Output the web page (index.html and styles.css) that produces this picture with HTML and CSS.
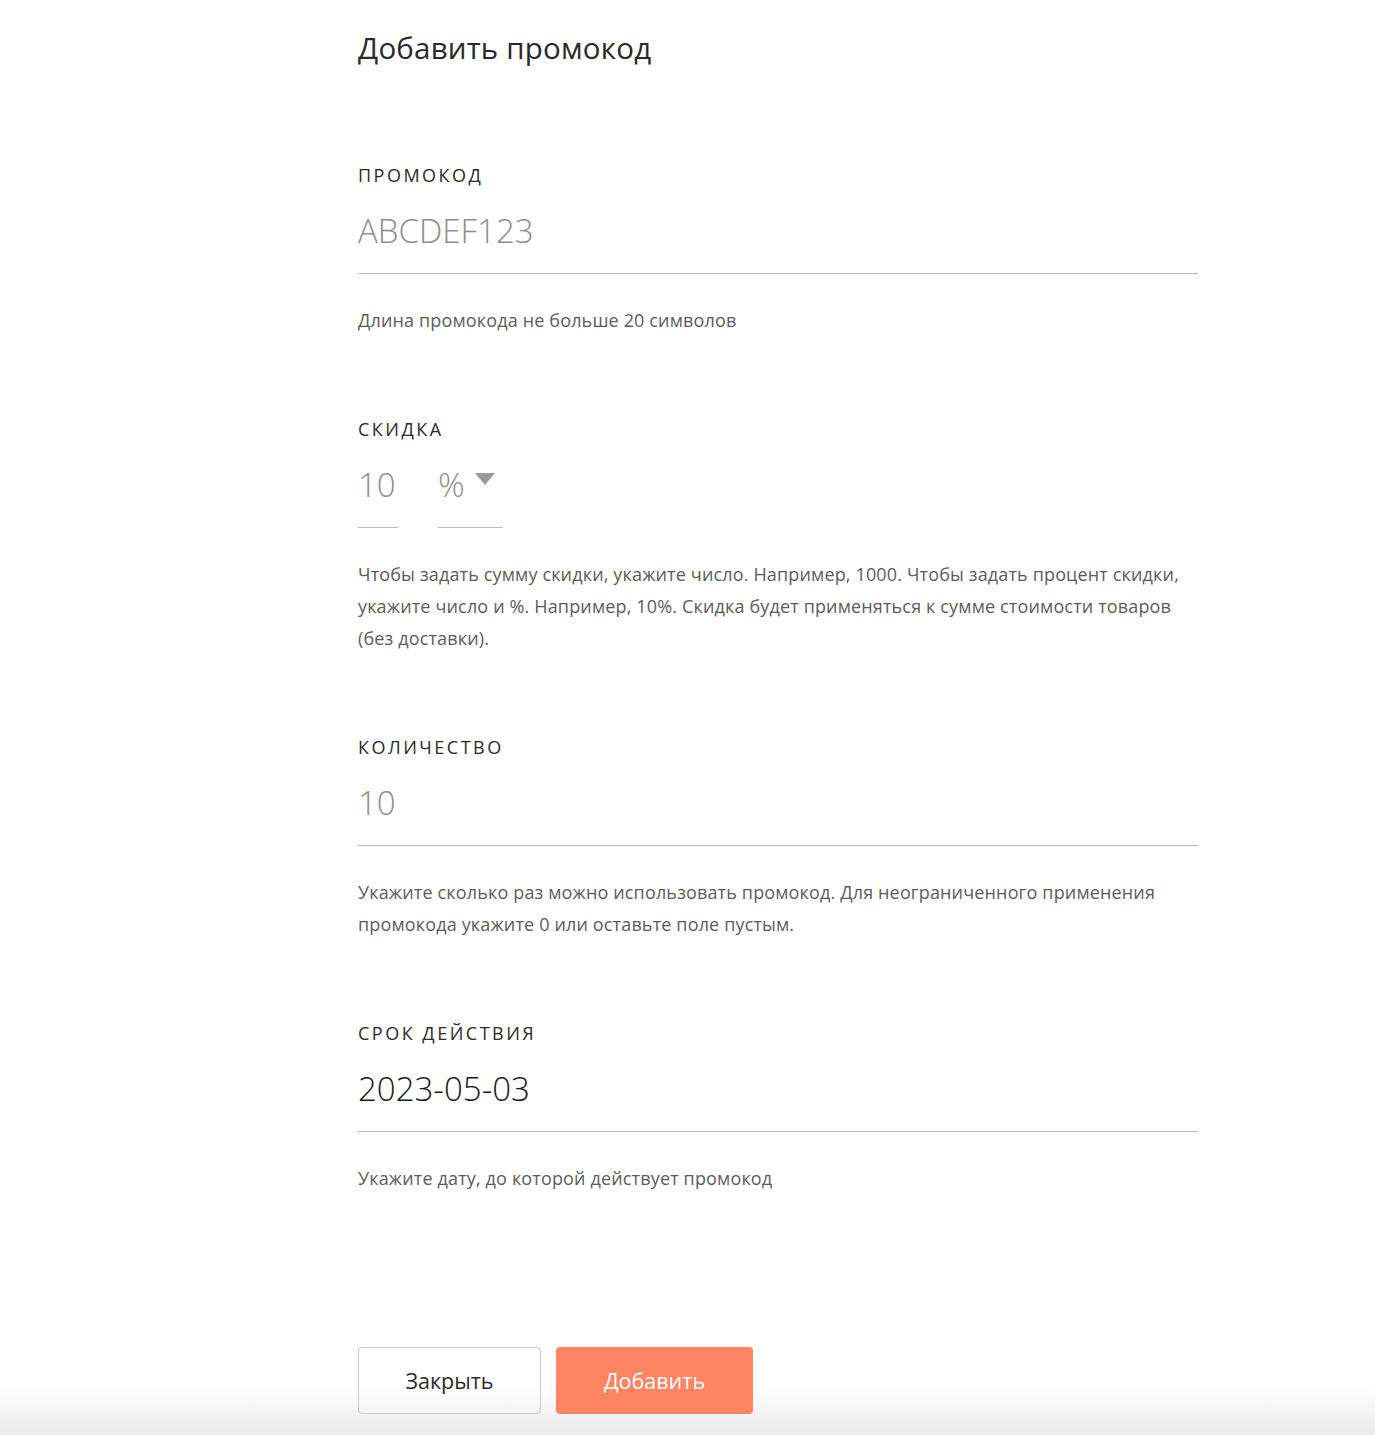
FILE: index.html
```html
<!DOCTYPE html>
<html lang="ru">
<head>
<meta charset="utf-8">
<title>Добавить промокод</title>
<link rel="stylesheet" href="styles.css">
</head>
<body>
<div class="page">
  <h1 class="title">Добавить промокод</h1>

  <div class="field field-first">
    <div class="label">Промокод</div>
    <div class="input"><span class="placeholder">ABCDEF123</span></div>
    <p class="hint">Длина промокода не больше 20 символов</p>
  </div>

  <div class="field">
    <div class="label">Скидка</div>
    <div class="discount-row">
      <div class="input input-short"><span class="placeholder">10</span></div>
      <div class="input input-select">
        <span class="placeholder">%</span>
        <svg class="caret" width="20" height="12" viewBox="0 0 20 12"><path d="M0 0H20L10 12Z" fill="#999"/></svg>
      </div>
    </div>
    <p class="hint">Чтобы задать сумму скидки, укажите число. Например, 1000. Чтобы задать процент скидки, укажите число и %. Например, 10%. Скидка будет применяться к сумме стоимости товаров (без доставки).</p>
  </div>

  <div class="field">
    <div class="label">Количество</div>
    <div class="input"><span class="placeholder">10</span></div>
    <p class="hint">Укажите сколько раз можно использовать промокод. Для неограниченного применения промокода укажите 0 или оставьте поле пустым.</p>
  </div>

  <div class="field">
    <div class="label">Срок действия</div>
    <div class="input"><span class="value">2023-05-03</span></div>
    <p class="hint">Укажите дату, до которой действует промокод</p>
  </div>
</div>

<div class="footer">
  <div class="buttons">
    <button class="btn btn-close">Закрыть</button>
    <button class="btn btn-add">Добавить</button>
  </div>
</div>
</body>
</html>
```

FILE: styles.css
```css
html, body {
  margin: 0;
  padding: 0;
  background: #fff;
}
body {
  font-family: "Open Sans", "Noto Sans", sans-serif;
  color: #222;
  height: 1435px;
  overflow: hidden;
  display: flex;
  flex-direction: column;
}
.page {
  padding-left: 358px;
  width: 840px;
}
.title {
  margin: 28px 0 0;
  font-size: 29.5px;
  line-height: 40px;
  font-weight: 400;
  color: #2a2a2a;
  letter-spacing: 0.2px;
}
.field {
  margin-top: 81px;
}
.field-first {
  margin-top: 95px;
}
.label {
  font-size: 18px;
  line-height: 24px;
  text-transform: uppercase;
  letter-spacing: 2.5px;
  color: #2a2a2a;
}
.input {
  padding-top: 20px;
  padding-bottom: 18px;
  line-height: 48px;
  height: 48px;
  font-size: 33px;
  font-weight: 300;
  border-bottom: 1px solid #b9b9b9;
}
.placeholder {
  color: #8e8e8e;
}
.value {
  color: #1a1a1a;
}
.discount-row {
  display: flex;
  gap: 40px;
}
.input-short {
  width: 40px;
}
.input-select {
  width: 65px;
  display: flex;
  align-items: center;
  gap: 10px;
}
.caret {
  margin-top: -12px;
}
.hint {
  margin: 30px 0 0;
  font-size: 18px;
  line-height: 32px;
  color: #5c5c5c;
  font-weight: 400;
  letter-spacing: 0.15px;
}
.footer {
  margin-top: auto;
  height: 105px;
  box-sizing: border-box;
  padding: 17px 0 0 358px;
  background: linear-gradient(to bottom, #fff 0, #fff 55px, #ebebeb 105px);
}
.buttons {
  display: flex;
  gap: 15px;
}
.btn {
  height: 67px;
  border-radius: 4px;
  font-family: "Open Sans", "Noto Sans", sans-serif;
  font-size: 21.5px;
  cursor: pointer;
}
.btn-close {
  width: 183px;
  background: transparent;
  border: 1px solid #c9c9c9;
  color: #2a2a2a;
}
.btn-add {
  width: 197px;
  background: #ff8562;
  border: none;
  color: #fff;
}
```
